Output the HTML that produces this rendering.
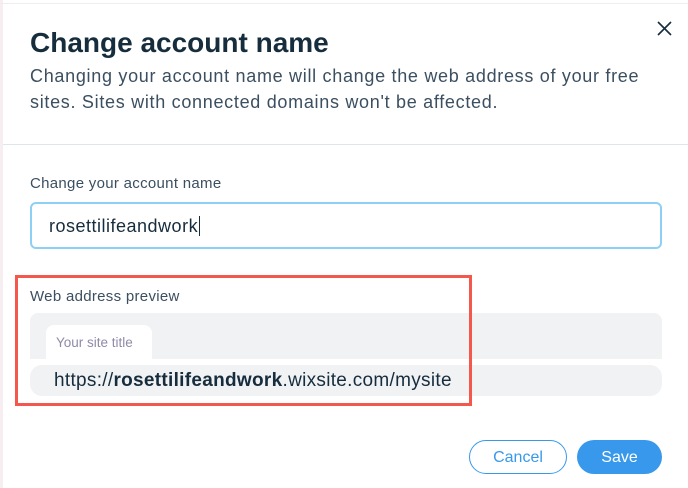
<!DOCTYPE html><html><head><style>
body{margin:0;width:688px;height:488px;background:#fff;font-family:"Liberation Sans",sans-serif;position:relative;overflow:hidden}
.a{position:absolute}
</style></head><body>
<div class="a" style="left:0;top:0;width:3px;height:488px;background:#f6eef0"></div>
<div class="a" style="left:0;top:3px;width:688px;height:1px;background:#eceef1"></div>
<div class="a" style="left:30px;top:27px;font-size:28px;font-weight:bold;color:#162d3d">Change account name</div>
<div class="a" style="left:30px;top:63px;font-size:18px;line-height:26px;color:#3b4f60;width:650px;letter-spacing:0.7px;white-space:nowrap">Changing your account name will change the web address of your free<br>sites. Sites with connected domains won't be affected.</div>
<svg class="a" style="left:657px;top:21px" width="15" height="15"><path d="M1 1L14 14M14 1L1 14" stroke="#162d3d" stroke-width="1.6"/></svg>
<div class="a" style="left:3px;top:144px;width:685px;height:1px;background:#dfe5eb"></div>
<div class="a" style="left:30px;top:175px;font-size:15px;color:#3b4f60;letter-spacing:0.3px">Change your account name</div>
<div class="a" style="left:30px;top:202px;width:628px;height:43px;border:2px solid #8ecff5;border-radius:6px"></div>
<div class="a" style="left:49px;top:216px;font-size:18px;color:#162d3d;letter-spacing:0.5px">rosettilifeandwork<span style="border-left:1px solid #162d3d;margin-left:1px"></span></div>
<div class="a" style="left:30px;top:313px;width:632px;height:46px;background:#f1f2f4;border-radius:8px 8px 0 0"></div>
<div class="a" style="left:46px;top:325px;width:106px;height:34px;background:#fff;border-radius:8px 8px 0 0"></div>
<div class="a" style="left:56px;top:335px;font-size:13.5px;color:#8f8aa8">Your site title</div>
<div class="a" style="left:30px;top:365px;width:632px;height:31px;background:#f1f2f4;border-radius:12px"></div>
<div class="a" style="left:54px;top:370px;font-size:19px;color:#162d3d;letter-spacing:0.3px">https://<b>rosettilifeandwork</b>.wixsite.com/mysite</div>
<div class="a" style="left:15px;top:275px;width:451px;height:125px;border:3px solid #f4574b"></div>
<div class="a" style="left:30px;top:288px;font-size:15px;color:#3b4f60;letter-spacing:0.3px">Web address preview</div>
<div class="a" style="left:469px;top:440px;width:96px;height:32px;border:1px solid #3899ec;border-radius:18px;color:#3899ec;font-size:16px;text-align:center;line-height:34px">Cancel</div>
<div class="a" style="left:577px;top:440px;width:85px;height:34px;background:#3899ec;border-radius:18px;color:#fff;font-size:16px;text-align:center;line-height:36px">Save</div>
</body></html>
